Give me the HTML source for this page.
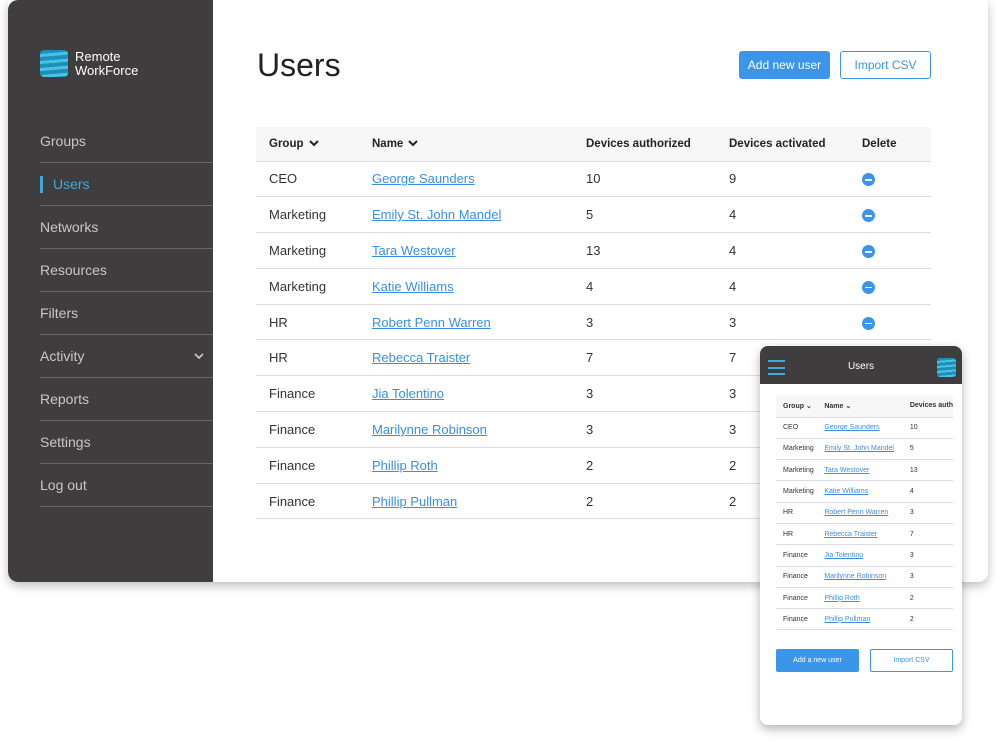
<!DOCTYPE html>
<html><head><meta charset="utf-8"><style>
*{margin:0;padding:0;box-sizing:border-box}
body{width:997px;height:742px;background:#fff;font-family:"Liberation Sans",sans-serif;position:relative;overflow:hidden}
.card{position:absolute;left:8px;top:0;width:980px;height:582px;background:#fff;border-radius:0 0 10px 10px;box-shadow:0 4px 10px rgba(0,0,0,.25);overflow:hidden}
.side{position:absolute;left:0;top:0;width:205px;height:582px;background:#3f3d3e;border-radius:10px 0 0 10px}
.logo{position:absolute;left:32px;top:50px;width:28px;height:27px;border-radius:4px;background:repeating-linear-gradient(175deg,#1e8fb8 0 4px,#49c2e6 4px 7px)}
.brand{position:absolute;left:67px;top:50px;color:#fff;font-size:13px;line-height:14px}
.nav{position:absolute;left:32px;top:120px;width:173px}
.nav div{height:43px;border-bottom:1px solid #666;color:#c8c8c8;font-size:14px;line-height:43px;position:relative}
.nav .act{color:#3ea7e0;padding-left:13px}
.nav .act:before{content:"";position:absolute;left:0;top:13px;width:3px;height:17px;background:#3ea7e0}
h1{position:absolute;left:249px;top:47px;font-weight:400;font-size:32px;color:#222}
.b1{position:absolute;left:731px;top:51px;width:91px;height:28px;background:#3b96ea;color:#fff;border-radius:3px;font-size:12px;text-align:center;line-height:28px}
.b2{position:absolute;left:832px;top:51px;width:91px;height:28px;border:1px solid #3b96ea;color:#3b96ea;border-radius:3px;font-size:12px;text-align:center;line-height:26px}
table{border-collapse:collapse;font-size:13px;color:#333}
.t{position:absolute;left:248px;top:127px;width:675px}
.t td,.t th{height:35.8px;border-bottom:1px solid #dcdbe8;text-align:left;padding:0;vertical-align:middle}
.t th{height:34px;background:#f7f7f7;font-size:11.5px;font-weight:700;color:#222}
.t td:first-child,.t th:first-child{padding-left:13px}
a{color:#3b8fe0;text-decoration:underline}
.del{display:inline-block;width:13px;height:13px;border-radius:50%;background:#3b96ea;position:relative;vertical-align:middle}
.del:after{content:"";position:absolute;left:3px;top:6px;width:7px;height:1.5px;background:#fff}
.ch{margin-left:5px;vertical-align:middle}
.m{position:absolute;left:760px;top:346px;width:202px;height:379px;background:#fff;border-radius:8px;box-shadow:0 4px 10px rgba(0,0,0,.3);overflow:hidden}
.mh{height:38px;background:#3f3d3e;color:#fff;font-size:10px;text-align:center;line-height:42px}
.ham{position:absolute;left:8px;top:14px;width:17px;height:15px;border-top:2px solid #3ea7e0;border-bottom:2px solid #3ea7e0}
.ham:after{content:"";position:absolute;left:0;top:4.5px;width:17px;height:2px;background:#3ea7e0}
.ml{position:absolute;left:177px;top:12px;width:19px;height:19px;border-radius:3px;background:repeating-linear-gradient(175deg,#1e8fb8 0 3px,#49c2e6 3px 5px)}
.mt{position:absolute;left:16px;top:49px;width:177px;font-size:7px;overflow:hidden;white-space:nowrap}
.mt td,.mt th{height:21.3px;border-bottom:1px solid #dcdbe8;text-align:left;padding:0}
.mt th{height:22px;background:#f7f7f7;font-weight:700}
.mt td:first-child,.mt th:first-child{padding-left:7px}
.mb1{position:absolute;left:16px;top:303px;width:83px;height:23px;background:#3b96ea;color:#fff;font-size:7px;text-align:center;line-height:23px;border-radius:2px}
.mb2{position:absolute;left:110px;top:303px;width:83px;height:23px;border:1px solid #3b96ea;color:#3b96ea;font-size:7px;text-align:center;line-height:21px;border-radius:2px}
</style></head><body>
<div class="card">
<div class="side">
<div class="logo"></div>
<div class="brand">Remote<br>WorkForce</div>
<div class="nav">
<div>Groups</div><div class="act">Users</div><div>Networks</div><div>Resources</div><div>Filters</div><div>Activity<svg style="position:absolute;right:9px;top:18px" width="10" height="7" viewBox="0 0 10 7"><path d="M1 1l4 4 4-4" fill="none" stroke="#ccc" stroke-width="1.6"/></svg></div><div>Reports</div><div>Settings</div><div>Log out</div>
</div></div>
<h1>Users</h1>
<div class="b1">Add new user</div><div class="b2">Import CSV</div>
<table class="t">
<tr><th style="width:116px">Group<svg class="ch" width="10" height="7" viewBox="0 0 10 7"><path d="M1 1l4 4 4-4" fill="none" stroke="#222" stroke-width="2"/></svg></th><th style="width:214px">Name<svg class="ch" width="10" height="7" viewBox="0 0 10 7"><path d="M1 1l4 4 4-4" fill="none" stroke="#222" stroke-width="2"/></svg></th><th style="width:143px">Devices authorized</th><th style="width:133px">Devices activated</th><th>Delete</th></tr>
<tr><td>CEO</td><td><a>George Saunders</a></td><td>10</td><td>9</td><td><span class="del"></span></td></tr>
<tr><td>Marketing</td><td><a>Emily St. John Mandel</a></td><td>5</td><td>4</td><td><span class="del"></span></td></tr>
<tr><td>Marketing</td><td><a>Tara Westover</a></td><td>13</td><td>4</td><td><span class="del"></span></td></tr>
<tr><td>Marketing</td><td><a>Katie Williams</a></td><td>4</td><td>4</td><td><span class="del"></span></td></tr>
<tr><td>HR</td><td><a>Robert Penn Warren</a></td><td>3</td><td>3</td><td><span class="del"></span></td></tr>
<tr><td>HR</td><td><a>Rebecca Traister</a></td><td>7</td><td>7</td><td></td></tr>
<tr><td>Finance</td><td><a>Jia Tolentino</a></td><td>3</td><td>3</td><td></td></tr>
<tr><td>Finance</td><td><a>Marilynne Robinson</a></td><td>3</td><td>3</td><td></td></tr>
<tr><td>Finance</td><td><a>Phillip Roth</a></td><td>2</td><td>2</td><td></td></tr>
<tr><td>Finance</td><td><a>Phillip Pullman</a></td><td>2</td><td>2</td><td></td></tr>
</table>
</div>
<div class="m">
<div class="mh">Users</div><div class="ham"></div><div class="ml"></div>
<table class="mt">
<tr><th style="width:50px">Group &#8964;</th><th style="width:88px">Name &#8964;</th><th>Devices auth</th></tr>
<tr><td>CEO</td><td><a>George Saunders</a></td><td>10</td></tr>
<tr><td>Marketing</td><td><a>Emily St. John Mandel</a></td><td>5</td></tr>
<tr><td>Marketing</td><td><a>Tara Westover</a></td><td>13</td></tr>
<tr><td>Marketing</td><td><a>Katie Williams</a></td><td>4</td></tr>
<tr><td>HR</td><td><a>Robert Penn Warren</a></td><td>3</td></tr>
<tr><td>HR</td><td><a>Rebecca Traister</a></td><td>7</td></tr>
<tr><td>Finance</td><td><a>Jia Tolentino</a></td><td>3</td></tr>
<tr><td>Finance</td><td><a>Marilynne Robinson</a></td><td>3</td></tr>
<tr><td>Finance</td><td><a>Phillip Roth</a></td><td>2</td></tr>
<tr><td>Finance</td><td><a>Phillip Pullman</a></td><td>2</td></tr>
</table>
<div class="mb1">Add a new user</div><div class="mb2">Import CSV</div>
</div>
</body></html>
